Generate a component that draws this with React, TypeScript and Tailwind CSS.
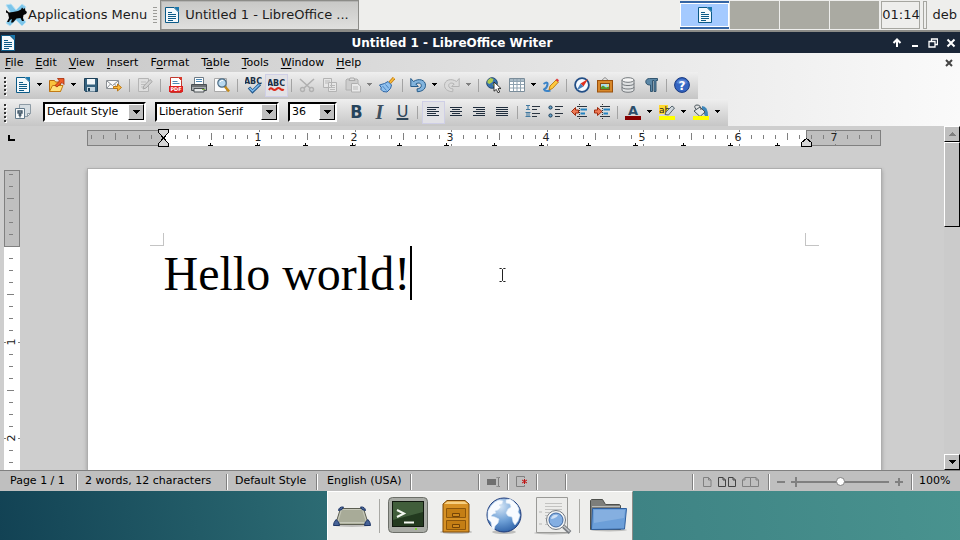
import React, { useLayoutEffect, useRef, useState } from "react";

type Kids = { children?: React.ReactNode };

function Svg({ size = 16, children }: Kids & { size?: number }) {
  return (
    <svg width={size} height={size} viewBox={`0 0 ${size} ${size}`} className="shrink-0" aria-hidden="true">
      {children}
    </svg>
  );
}

/* ---------- toolbar parts ---------- */

function Tool({ label, active, children }: Kids & { label: string; active?: boolean }) {
  return (
    <button
      type="button"
      aria-label={label}
      className={
        active
          ? "flex h-[23px] w-[23px] shrink-0 items-start border border-[#cfcfe6] bg-[#e2e2e6] pt-[2px] pl-[2px]"
          : "flex h-[23px] w-[23px] shrink-0 items-start pt-[3px] pl-[3px]"
      }
    >
      {children}
    </button>
  );
}

function Letter({ label, children }: Kids & { label: string }) {
  return (
    <button type="button" aria-label={label} className="flex h-[23px] w-[23px] shrink-0 items-center justify-center pb-[2px]">
      {children}
    </button>
  );
}

function Drop({ label, dim }: { label: string; dim?: boolean }) {
  return (
    <button type="button" aria-label={label} className="flex h-[23px] w-[11px] shrink-0 items-center pb-[2px] pl-[2px]">
      <svg width="5" height="3" viewBox="0 0 5 3" aria-hidden="true" shapeRendering="crispEdges">
        <path d="M0 0h5v1H0zM1 1h3v1H1zM2 2h1v1H2z" fill={dim ? "#808080" : "#000"} />
      </svg>
    </button>
  );
}

function Sep() {
  return (
    <div className="flex w-2 shrink-0 pl-[3px]">
      <div className="h-[13px] w-px bg-[#a3a3a3]" />
    </div>
  );
}

function Handle() {
  return (
    <div className="flex w-3 shrink-0 flex-col items-start gap-[2px] pl-1">
      {[0, 1, 2, 3, 4].map((i) => (
        <span key={i} className="h-[2px] w-[2px] bg-[#333] shadow-[1px_1px_0_#fff]" />
      ))}
    </div>
  );
}

function Combo({ label, value, width }: { label: string; value: string; width: string }) {
  return (
    <div
      className={`flex h-5 shrink-0 border-2 border-t-black border-r-white border-b-white border-l-black bg-white ${width}`}
    >
      <div className="relative flex w-full">
        <select
          aria-label={label}
          defaultValue={value}
          className="w-full appearance-none bg-white pl-[2px] text-[11px] leading-4 text-black outline-none"
        >
          <option>{value}</option>
        </select>
        <span className="pointer-events-none absolute inset-y-0 right-0 flex w-4 items-center justify-center border border-t-white border-r-black border-b-black border-l-white bg-[#bfbfbf]">
          <svg width="7" height="4" viewBox="0 0 7 4" aria-hidden="true" shapeRendering="crispEdges">
            <path d="M0 0h7v1H0zM1 1h5v1H1zM2 2h3v1H2zM3 3h1v1H3z" />
          </svg>
        </span>
      </div>
    </div>
  );
}

/* ---------- icons ---------- */

const WriterIcon = () => (
  <Svg>
    <path d="M1.500.5h8.500l4.500 4.500v10.500h-13z" fill="#f4f9fc" stroke="#0b5a87" />
    <path d="M10 0h5v5z" fill="#1a78ad" />
    <path d="M4 5.500h4M4 7.500h8M4 9.500h8M4 11.500h8M4 13.500h5" stroke="#0b5a87" />
  </Svg>
);

const XfceMouse = () => (
  <svg width="24" height="24" viewBox="0 0 24 24" className="shrink-0" aria-hidden="true">
    <path d="M2 2l5-1 5 6 6-6 4 3-6 8 6 7-4 4-6-6-6 6-4-3 6-8z" fill="#7cc5ea" stroke="#b6e0f4" />
    <path
      d="M2 7l3 2.500 4-.5 5-1 3-1.500 1-2 1.500 1.500L21 5l.3 2.500L23 9l-1 2-2.500 1-.5 3 1 3h-2l-1.500-3-4 .5L9 19.500H7l1-3.500-2 1-1 2H3l2-4-1-4.500-2-1z"
      fill="#060606"
    />
  </svg>
);

const OpenIcon = () => (
  <Svg>
    <path d="M.5 14.500v-11h5l1 1.500h5v9.500z" fill="#f9c33c" stroke="#b66a12" />
    <path d="M.5 14.500L3.500 8.500H14l-2.500 6z" fill="#ffe07a" stroke="#c27a14" />
    <path d="M6 8.500L10.500 4 8.500 1.500h6.500v6l-2-2-5 4.500z" fill="#ed5a25" stroke="#a52c08" strokeWidth=".8" />
  </Svg>
);

const SaveIcon = () => (
  <Svg>
    <path d="M1.500 1.500h13v13h-12l-1-1z" fill="#35627f" stroke="#1f4159" />
    <rect x="4" y="2" width="8" height="5.500" fill="#f2f7fa" />
    <rect x="4" y="10" width="8" height="4.500" fill="#c5d5df" />
    <rect x="5" y="11" width="2" height="3" fill="#1f4159" />
  </Svg>
);

const MailIcon = () => (
  <Svg>
    <path d="M.5 3.500h12v8H.5z" fill="#fbfbfb" stroke="#8a8f94" />
    <path d="M1 4l5.500 4.500L12 4M1 11l3.500-4M12 11L8.500 7" fill="none" stroke="#8a8f94" />
    <path d="M7.500 9.500h4V7l4 3.500-4 3.500v-2.500h-4z" fill="#fbb93a" stroke="#b9700a" strokeWidth=".9" />
  </Svg>
);

const EditIcon = () => (
  <Svg>
    <path d="M1.500 1.500h10v13h-10z" fill="#dedede" stroke="#b5b5b5" />
    <path d="M4 5h5M4 7.500h4M4 10h2" stroke="#bdbdbd" />
    <path d="M6 12l.8-3L13 2.500 15.200 4.500 9 11z" fill="#d0d0d0" stroke="#a5a5a5" />
  </Svg>
);

const PdfIcon = () => (
  <Svg>
    <path d="M2.500.5h8l3 3v12h-11z" fill="#fff" stroke="#c1392f" />
    <path d="M10 0h4v4z" fill="#d83a2c" />
    <path d="M4.500 4.500h5M4.500 6.500h7" stroke="#4c88b5" />
    <rect x="1" y="9" width="14" height="6" fill="#e02020" />
    <text x="8" y="14" fontSize="5" fontWeight="700" textAnchor="middle" fill="#fff">
      PDF
    </text>
  </Svg>
);

const PrintIcon = () => (
  <Svg>
    <path d="M3.500 7V.5h9V7" fill="#fff" stroke="#6f7b85" />
    <path d="M5 2.500h6M5 4.500h6" stroke="#4c88b5" />
    <path d="M.5 7.500h15v6H.5z" fill="#a9adb0" stroke="#4b5054" />
    <path d="M1 8h14v2H1z" fill="#6e7275" />
    <path d="M3 11.500h10v3.500H3z" fill="#e7e9ea" stroke="#4b5054" />
    <path d="M11 12.500h3" stroke="#7fb93a" />
  </Svg>
);

const PreviewIcon = () => (
  <Svg>
    <path d="M.5 1.500h12v13H.5z" fill="#fbfbfb" stroke="#a8a8a8" />
    <path d="M10.500 9l4.500 5.500" stroke="#c48a1a" strokeWidth="2.500" />
    <circle cx="8" cy="6" r="4.200" fill="#b9d9ef" stroke="#4c6b83" strokeWidth="1.200" />
    <path d="M6 5q1-2 3-1.500" fill="none" stroke="#fff" />
  </Svg>
);

const SpellIcon = ({ auto }: { auto?: boolean }) => (
  <svg width="17" height="17" viewBox="0 0 17 17" className="shrink-0" aria-hidden="true">
    <text x="8" y={auto ? 9 : 7} fontSize="8" fontWeight="700" textAnchor="middle" fill="#1b2f45">
      ABC
    </text>
    {auto ? (
      <path d="M1 13q1.500-3 3.500-1t4 0 4 0 3 0" fill="none" stroke="#dd2a1b" strokeWidth="2" />
    ) : (
      <g fill="none">
        <path d="M4 10.500l3.500 4L15 7" stroke="#20578c" strokeWidth="3.200" />
        <path d="M4.500 11l3 3L14.500 7.500" stroke="#7ebcf0" strokeWidth="1.500" />
      </g>
    )}
  </svg>
);

const CutIcon = () => (
  <Svg>
    <path d="M1 2l10 9M15 2L5 11" stroke="#b0b0b0" strokeWidth="1.600" />
    <circle cx="3.500" cy="12.500" r="2" fill="none" stroke="#b0b0b0" strokeWidth="1.400" />
    <circle cx="12.500" cy="12.500" r="2" fill="none" stroke="#b0b0b0" strokeWidth="1.400" />
  </Svg>
);

const CopyIcon = () => (
  <Svg>
    <path d="M1.500 1.500h8v9h-8zM6.500 5.500h8v9h-8z" fill="#e6e6e6" stroke="#b3b3b3" />
    <path d="M3 4h5M3 6h3M8 8.500h5M8 10.500h5M8 12.500h5" stroke="#b9b9b9" />
  </Svg>
);

const PasteIcon = () => (
  <Svg>
    <path d="M1 3l1-1h10l1 1v10H1z" fill="#cdcdcd" stroke="#b0b0b0" />
    <path d="M4 3.500L5 1h4l1 2.500z" fill="#ddd" stroke="#aaa" />
    <path d="M6.500 6.500h6l3 2.500v6h-9z" fill="#e9e9e9" stroke="#b0b0b0" />
    <path d="M8 10h5M8 12h5" stroke="#bbb" />
  </Svg>
);

const BrushIcon = () => (
  <Svg>
    <path d="M10.500 6L15 1" stroke="#c37a10" strokeWidth="3.200" />
    <path d="M10.500 6L15 1" stroke="#f8bd3c" strokeWidth="1.600" />
    <path d="M.5 8l5-1.500L9 4.500l3.500 3.500-1 3.500L8 15l-4-.5L1.500 12l1-1z" fill="#8fc0ee" stroke="#2f66a5" />
    <path d="M3.500 9l4 4.500M6.500 7.500l3.500 4" stroke="#3c76b4" strokeWidth=".8" />
  </Svg>
);

const UndoIcon = ({ dim }: { dim?: boolean }) => (
  <Svg>
    <g transform={dim ? "translate(16 0) scale(-1 1)" : undefined}>
      <path
        d="M.8 1.500v8h7.500L5.800 7c3-2 5.500-.5 5.500 1.500 0 2-1.500 3.200-4.300 3.400l.3 2.800c5-.1 8.200-2.700 8.200-6.400C15.500 3 9 .8 3.500 4.500z"
        fill={dim ? "#dadada" : "#82b4dd"}
        stroke={dim ? "#b4b4b4" : "#255b8a"}
      />
    </g>
  </Svg>
);

const LinkIcon = () => (
  <Svg>
    <circle cx="6" cy="6" r="5.300" fill="#3872b0" stroke="#254a70" />
    <path d="M1.500 3.500L4.500 1l3 1-1 3-3 2-2-1zM6.500 7.500l3-1.500 1.500 2-2.500 2.500z" fill="#b0cc50" />
    <path d="M8 5l7 6.500-3 .2 1.700 3.300-1.700.8-1.700-3.400L8 14.200z" fill="#fff" stroke="#222" strokeWidth=".9" />
  </Svg>
);

const TableIcon = () => (
  <Svg>
    <path d="M.5 1.500h15v13H.5z" fill="#fff" stroke="#7b8d9a" />
    <path d="M1 2h14v2.500H1z" fill="#a9bac6" />
    <path d="M1 4.500h14M1 7.500h14M1 11h14M4.500 2v12M8 2v12M11.500 2v12" stroke="#8fa2b0" />
  </Svg>
);

const DrawIcon = () => (
  <Svg>
    <path d="M.5 7Q5 4 4.500 7.500T1 12.500q1 2.500 6.500 1" fill="none" stroke="#3a83c8" strokeWidth="2" />
    <path d="M6 13l1-4 6-6 2.500 2L9.500 11.500z" fill="#ffc83d" stroke="#b5780f" strokeWidth=".9" />
    <path d="M12.500 3L14 1.500l2 1.800L14.800 5z" fill="#e03c3c" />
  </Svg>
);

const CompassIcon = () => (
  <Svg>
    <circle cx="8" cy="8" r="6.900" fill="#f5faff" stroke="#234f86" strokeWidth="1.800" />
    <path d="M14 2L9.500 9.500 6.500 6.500z" fill="#e0301f" />
    <path d="M2.500 13.500l4-7 3 3z" fill="#4b7fb8" />
  </Svg>
);

const GalleryIcon = () => (
  <Svg>
    <path d="M4 4l4-3.500L12 4" fill="none" stroke="#8d8d8d" />
    <rect x=".5" y="3.500" width="15" height="11.500" fill="#d8882b" stroke="#9b500b" />
    <rect x="3.500" y="6.500" width="9" height="6" fill="#a8dcf0" stroke="#8b4a10" />
    <path d="M4 12v-2l2-1.500 3 2 3-1v2.500z" fill="#559a2c" />
    <circle cx="10.500" cy="8.500" r="1" fill="#ffe14e" />
  </Svg>
);

const DbIcon = () => (
  <Svg>
    <path d="M2 3v10c0 3 12 3 12 0V3" fill="#dfe1e2" stroke="#74797d" />
    <ellipse cx="8" cy="3" rx="6" ry="2.300" fill="#f5f5f5" stroke="#74797d" />
    <path d="M2 6.500c0 2.700 12 2.700 12 0M2 10c0 2.700 12 2.700 12 0" fill="none" stroke="#74797d" />
  </Svg>
);

const PilcrowIcon = () => (
  <Svg>
    <path d="M14.500 1.500H6.500C1.500 1.500 1.500 8 6.500 8h1v6.500h2V3.500h1.500v11h2v-11h1.500z" fill="#5b87a6" stroke="#284c68" strokeWidth=".9" />
  </Svg>
);

const HelpIcon = () => (
  <Svg>
    <circle cx="8" cy="8" r="7.400" fill="#3566c2" stroke="#17387f" />
    <path d="M2.500 6a5.800 5 0 0 1 11 0q-5 2.500-11 0" fill="#6f98dd" opacity=".6" />
    <text x="8" y="12.500" fontSize="12" fontWeight="700" textAnchor="middle" fill="#fff">
      ?
    </text>
  </Svg>
);

const StylesIcon = () => (
  <Svg>
    <path d="M4.500.5h11v9l-3 3h-8z" fill="#d5dde2" stroke="#8d9ba5" />
    <path d="M15.500 9.500h-3v3z" fill="#f4f6f7" stroke="#8d9ba5" />
    <path d="M.5 4.500h9v10h-9z" fill="#f8fafb" stroke="#627a8b" />
    <path d="M3 9V7h4v2zM5 9v4.500M3.500 11h3" fill="none" stroke="#3c5364" strokeWidth="1.300" />
  </Svg>
);

const LINES: Record<string, string> = {
  left: "M2 3.500h12M2 5.500h9M2 7.500h12M2 9.500h9M2 11.500h12",
  center: "M2 3.500h12M4 5.500h8M2 7.500h12M4 9.500h8M2 11.500h12",
  right: "M2 3.500h12M5 5.500h9M2 7.500h12M5 9.500h9M2 11.500h12",
  full: "M2 3.500h12M2 5.500h12M2 7.500h12M2 9.500h12M2 11.500h12",
};
const AlignIcon = ({ kind }: { kind: string }) => (
  <Svg>
    <path d={LINES[kind]} stroke="#1f2d3d" />
  </Svg>
);

const ListIcon = ({ bullets }: { bullets?: boolean }) => (
  <Svg>
    {bullets ? (
      <g>
        <circle cx="2.500" cy="3.500" r="1.600" fill="#69a3c8" stroke="#153a58" />
        <circle cx="2.500" cy="11.500" r="1.600" fill="#69a3c8" stroke="#153a58" />
      </g>
    ) : (
      <path d="M1 1.500h4M3 1.500v4M1 5.500h4M.5 8.500h5M2 8.500v4M4 8.500v4M.5 12.500h5" fill="none" stroke="#4179a0" />
    )}
    <path d="M7 2.500h8M7 5.500h5M7 9.500h8M7 12.500h5" stroke="#2a3440" />
  </Svg>
);

const IndentIcon = ({ inward }: { inward?: boolean }) => (
  <Svg>
    <path d="M6 2.500h10M6 12.500h10" stroke="#2a3440" />
    <path d="M9.500 5.500h6.500M9.500 9.500h4.500" stroke="#2382c0" strokeWidth="2" />
    <path d="M8.500 0v15" stroke="#333" strokeDasharray="1 1" />
    <path
      d={inward ? "M.5 6h3V3.500L8 7.500l-4.500 4V9h-3z" : "M7.500 6h-3V3.500L.5 7.500l4 4V9h3z"}
      fill="#ee7a55"
      stroke="#9f2a0d"
      strokeWidth="1"
    />
  </Svg>
);

const FontColorIcon = () => (
  <Svg>
    <text x="8" y="11" fontSize="13" fontWeight="700" textAnchor="middle" fill="#2c4f6c">
      A
    </text>
    <rect y="12" width="16" height="4" fill="#860000" />
  </Svg>
);

const HighlightIcon = () => (
  <Svg>
    <rect x="0" y="1" width="9" height="9" fill="#ffd92e" />
    <text x="0" y="9" fontSize="9" fill="#222">
      ab
    </text>
    <path d="M6 10.500l1-2.500L13 2l2.500 2-6 7z" fill="#cfd7dc" stroke="#54636d" />
    <rect y="12" width="16" height="4" fill="#ffff00" />
  </Svg>
);

const BucketIcon = () => (
  <Svg>
    <path d="M9 2q6 0 6 10h-3L9 6z" fill="#3f87ba" />
    <path d="M1 7l6-4 5 5-5 4.500z" fill="#e4e7e8" stroke="#4a555c" />
    <path d="M3 5.500Q0 1 4 1t4 5" fill="none" stroke="#4a555c" />
    <rect y="12" width="16" height="4" fill="#ffff00" />
  </Svg>
);

/* ---------- rulers ---------- */

const range = (n: number) => Array.from({ length: n }, (_, i) => i);
const TAB_STOPS = [210, 257, 305, 352, 399, 446, 494, 541, 588, 635, 683, 730, 777];

function HorizontalRuler() {
  return (
    <svg width="794" height="18" viewBox="87 129 794 18" className="shrink-0" aria-hidden="true" shapeRendering="crispEdges">
      <rect x="163" y="130" width="643" height="16" fill="#fff" />
      <rect x="87.500" y="130.500" width="76" height="15" fill="#bfbfbf" stroke="#808080" />
      <rect x="806.500" y="130.500" width="74" height="15" fill="#bfbfbf" stroke="#808080" />
      {range(66).map((i) => {
        const k = i - 6;
        const x = 163.5 + k * 12;
        if (k === 0) return null;
        if (k % 8 === 0) return <path key={k} d={`M${x} 130v2M${x} 144v2`} stroke="#808080" />;
        return k % 4 === 0 ? (
          <path key={k} d={`M${x} 133v7`} stroke="#808080" />
        ) : (
          <path key={k} d={`M${x} 135v4`} stroke="#808080" />
        );
      })}
      {range(7).map((i) => (
        <text key={i} x={258 + i * 96} y="141" fontSize="11" textAnchor="middle" fill="#222">
          {i + 1}
        </text>
      ))}
      {TAB_STOPS.map((x) => (
        <path key={x} d={`M${x} 143h1v2h2v1h-5v-1h2z`} fill="#000" />
      ))}
      <g fill="#d6d6d6" stroke="#000">
        <path d="M158.500 129.500h10v3l-5 5.500-5-5.500z" />
        <path d="M158.500 146.500h10v-3l-5-5.500-5 5.500z" />
        <path d="M801.500 146.500h10v-4l-5-4-5 4z" />
      </g>
    </svg>
  );
}

function VerticalRuler() {
  const box = useRef<HTMLDivElement>(null);
  const [length, setLength] = useState(300);
  useLayoutEffect(() => {
    const el = box.current;
    if (!el) return;
    const measure = () => setLength(el.clientHeight);
    measure();
    const watcher = new ResizeObserver(measure);
    watcher.observe(el);
    return () => watcher.disconnect();
  }, []);
  const bottom = 170 + length;
  return (
    <div ref={box} className="h-full w-4 overflow-hidden">
      <svg width="16" height={length} viewBox={`4 170 16 ${length}`} className="block" aria-hidden="true" shapeRendering="crispEdges">
        <rect x="4" y="246" width="16" height={Math.max(0, bottom - 246)} fill="#fff" />
        <rect x="4.500" y="170.500" width="15" height="76" fill="#bfbfbf" stroke="#808080" />
        {range(Math.ceil(length / 12)).map((i) => {
          const k = i - 6;
          const y = 246.5 + k * 12;
          if (k === 0) return null;
          if (k % 8 === 0) return <path key={k} d={`M4 ${y}h2M18 ${y}h2`} stroke="#808080" />;
          return k % 4 === 0 ? (
            <path key={k} d={`M7 ${y}h7`} stroke="#808080" />
          ) : (
            <path key={k} d={`M9 ${y}h4`} stroke="#808080" />
          );
        })}
        {range(Math.max(0, Math.floor((bottom - 254) / 96))).map((i) => {
          const y = 342 + i * 96;
          return (
            <text key={i} x="15" y={y} fontSize="11" textAnchor="middle" fill="#222" transform={`rotate(-90 15 ${y})`}>
              {i + 1}
            </text>
          );
        })}
      </svg>
    </div>
  );
}

/* ---------- dock icons ---------- */

const DeskIcon = () => (
  <Svg size={40}>
    <ellipse cx="20" cy="29.500" rx="18" ry="1.500" fill="#0003" />
    <path d="M8.500 12.500h23l5 16h-33z" fill="#b2b5a1" stroke="#5c5e52" />
    <path d="M9.500 13.500h21l4 13h-29z" fill="#a8ab98" stroke="#c6c8ba" />
    <g fill="#476397" stroke="#1f3767">
      <path d="M6.500 14.500q.5-4 5-3.500l-1.500 2.500zM33.500 14.500q-.5-4-5-3.500l1.500 2.500z" />
      <path d="M1.500 29.500q0-3 2.500-6 3.500 2 3.500 6zM38.500 29.500q0-3-2.500-6-3.500 2-3.500 6z" />
    </g>
  </Svg>
);

const TerminalIcon = () => (
  <Svg size={40}>
    <rect x=".5" y="1.500" width="39" height="35" rx="4" fill="#a9aca6" stroke="#6c6f69" />
    <rect x="4.500" y="5.500" width="31" height="25" fill="#233a1f" stroke="#10180e" />
    <path d="M5 6h30v10L5 24z" fill="#52714b" opacity=".65" />
    <path d="M9 14l7 3.500L9 21M16 26.500h10" fill="none" stroke="#f4f8f1" strokeWidth="2" />
    <path d="M27 33h2" stroke="#7bd032" strokeWidth="2" />
  </Svg>
);

const CabinetIcon = () => (
  <Svg size={40}>
    <ellipse cx="20" cy="36" rx="16" ry="2" fill="#0003" />
    <path d="M7 8l4-3.500h18L33 8v28H7z" fill="#d79125" stroke="#7f4a08" />
    <path d="M8 8l3.500-2.500h17L32 8z" fill="#f7d083" />
    <path d="M10.500 12.500h19v9h-19zM10.500 24.500h19v9h-19z" fill="#c47e14" stroke="#8d560a" />
    <path d="M16.500 17.500h7v3h-7zM16.500 28.500h7v3h-7z" fill="#d18a1d" stroke="#744407" />
  </Svg>
);

const GlobeIcon = () => (
  <Svg size={40}>
    <defs>
      <radialGradient id="sea" cx=".4" cy=".25" r=".8">
        <stop offset="0" stopColor="#d5e5f5" />
        <stop offset=".55" stopColor="#6d9fd6" />
        <stop offset="1" stopColor="#2c5fa5" />
      </radialGradient>
    </defs>
    <ellipse cx="20" cy="36" rx="12" ry="2" fill="#0003" />
    <circle cx="20" cy="19" r="17" fill="url(#sea)" stroke="#1f3a79" />
    <path
      d="M4 15l3-5 4-4 4-2 4 1-1 3-3 1 2 2-3 3-3 1 1 2-3 1-2 2 4 1 4 2-1 4-3 3-1 4-2-2-1-6-3-3zM22 4l4-1 3 2 4 4 2 4-1 3 2 3-2 6-3 4-2-3-1-5-4-1-2-3 2-4 3-2-1-3-4-1z"
      fill="#f8fbff"
      stroke="#d5e4f3"
      strokeWidth=".6"
    />
  </Svg>
);

const FinderIcon = () => (
  <Svg size={40}>
    <ellipse cx="20" cy="37" rx="18" ry="1.500" fill="#0003" />
    <path d="M4.500 1.500h31v35h-31z" fill="#ececea" stroke="#9a9a97" />
    <path d="M13 7.500h17M13 10.500h17M13 13.500h17M13 16.500h13M13 19.500h6M13 22.500h6M13 28.500h7" stroke="#c3c3c1" />
    <path d="M7 16h3M7 28h3" stroke="#b7b7b5" />
    <path d="M30 29l8 7.500" stroke="#777b80" strokeWidth="4" />
    <path d="M31 29.500l6.500 6" stroke="#c2c5c8" strokeWidth="1.500" />
    <circle cx="24" cy="24" r="8.500" fill="#8fb6e4" stroke="#f4f5f6" strokeWidth="3" />
    <circle cx="24" cy="24" r="9.500" fill="none" stroke="#74797e" />
    <circle cx="24" cy="24" r="7" fill="#83aee2" stroke="#466da3" />
    <path d="M19 23q1-5 7-4-1 3-7 4" fill="#cfe0f5" />
  </Svg>
);

const FolderIcon = () => (
  <Svg size={40}>
    <ellipse cx="21" cy="34" rx="18" ry="1.500" fill="#0003" />
    <path d="M2.500 33.500v-29l1-1h11l3 5h14l1 1v24z" fill="#7d7e7b" stroke="#4e504c" />
    <path d="M4 10.500h28" stroke="#b9bab7" />
    <path d="M4.500 12.500h34l-2 20.500-33 .5z" fill="#6c9fd9" stroke="#2f5f9e" />
    <path d="M6 14h31l-1 8-30 5z" fill="#9dc0e8" opacity=".5" />
  </Svg>
);

function DockItem({ label, children }: Kids & { label: string }) {
  return (
    <button type="button" aria-label={label} className="flex h-12 w-12 items-center justify-center">
      {children}
    </button>
  );
}
const DockSep = () => (
  <div className="flex w-2 pl-[3px]">
    <div className="h-[34px] w-px bg-[#a8a8a4]" />
  </div>
);

/* ---------- regions ---------- */

function Panel() {
  return (
    <header className="flex h-8 shrink-0 items-stretch border-b-2 border-[#8a8a86] bg-[#eeeeec] text-[13px] text-[#1c1c1c]">
      <button type="button" className="flex items-center pl-1">
        <XfceMouse />
        <span>Applications Menu</span>
      </button>
      <div className="ml-[6px] flex flex-col justify-center gap-[2px] pr-[3px]">
        {range(6).map((i) => (
          <span key={i} className="h-px w-1 bg-[#9c9c98]" />
        ))}
      </div>
      <button
        type="button"
        className="flex w-[199px] items-center gap-[5px] border border-[#8c8c88] bg-linear-to-b from-[#c8c8c6] to-[#e0e0de] pl-[3px] shadow-[inset_1px_1px_0_#b4b4b2]"
      >
        <WriterIcon />
        <span className="whitespace-pre">Untitled 1 - LibreOffice ...</span>
      </button>
      <div className="flex-1" />
      <nav aria-label="Workspaces" className="flex gap-px py-px">
        <button
          type="button"
          aria-label="Workspace 1"
          className="flex w-[49px] items-center justify-center border-y-2 border-[#3465a4] bg-[#a4caff] shadow-[inset_0_0_0_1px_#fff]"
        >
          <WriterIcon />
        </button>
        {[2, 3, 4].map((n) => (
          <button key={n} type="button" aria-label={`Workspace ${n}`} className="w-[49px] bg-[#aaaaa2]" />
        ))}
      </nav>
      <div className="my-px ml-[2px] flex w-[39px] items-center justify-center border border-[#a6a6a0]">01:14</div>
      <div className="my-px ml-[3px] w-1 border border-[#a6a6a0]" />
      <button type="button" className="pr-[3px] pl-[5px]">
        deb
      </button>
    </header>
  );
}

function TitleBar() {
  return (
    <div className="flex h-[21px] shrink-0 items-center bg-[#1a2637] text-white">
      <WriterIcon />
      <h1 className="flex-1 text-center text-[12px] font-bold">Untitled 1 - LibreOffice Writer</h1>
      <div className="flex w-[72px] shrink-0 items-center">
        {[
          ["Shade", "M5 9V1.500M1.500 5L5 1.500 8.500 5"],
          ["Minimise", "M2 8h6"],
          ["Restore", "M3.500 3V1h6v5.500H7.500M1 3.500h6v5.500H1z"],
          ["Close", "M1.500 1.500l7 7M8.500 1.500l-7 7"],
        ].map(([name, d]) => (
          <button key={name} type="button" aria-label={name} className="flex w-[18px] justify-center">
            <svg width="10" height="10" viewBox="0 0 10 10" aria-hidden="true">
              <path d={d} fill="none" stroke="#fff" strokeWidth={name === "Restore" ? 1.3 : 2} />
            </svg>
          </button>
        ))}
      </div>
    </div>
  );
}

const MENUS: [string, string, string][] = [
  ["", "F", "ile"],
  ["", "E", "dit"],
  ["", "V", "iew"],
  ["", "I", "nsert"],
  ["F", "o", "rmat"],
  ["T", "a", "ble"],
  ["", "T", "ools"],
  ["", "W", "indow"],
  ["", "H", "elp"],
];

function MenuBar() {
  return (
    <nav aria-label="Menu" className="flex h-[19px] shrink-0 items-center gap-3 pt-px pl-[5px] text-[11px]">
      {MENUS.map(([a, b, c]) => (
        <button key={a + b + c} type="button">
          {a}
          <span className="underline underline-offset-2">{b}</span>
          {c}
        </button>
      ))}
      <button type="button" aria-label="Close document" className="mr-[7px] ml-auto">
        <svg width="8" height="8" viewBox="0 0 8 8" aria-hidden="true">
          <path d="M1 1l6 6M7 1L1 7" stroke="#444" strokeWidth="2" />
        </svg>
      </button>
    </nav>
  );
}

const BAR = "flex w-fit items-center bg-linear-to-b from-[#efefef] to-[#c6c6c6] pr-1";

function StandardBar() {
  return (
    <div className={`h-[27px] ${BAR}`}>
      <Handle />
      <Tool label="New"><WriterIcon /></Tool>
      <Drop label="New options" />
      <Tool label="Open"><OpenIcon /></Tool>
      <Drop label="Open options" />
      <Tool label="Save"><SaveIcon /></Tool>
      <Tool label="Email"><MailIcon /></Tool>
      <Sep />
      <Tool label="Edit file"><EditIcon /></Tool>
      <Sep />
      <Tool label="Export as PDF"><PdfIcon /></Tool>
      <Tool label="Print"><PrintIcon /></Tool>
      <Tool label="Page preview"><PreviewIcon /></Tool>
      <Sep />
      <Tool label="Spelling"><SpellIcon /></Tool>
      <Tool label="Automatic spell check" active><SpellIcon auto /></Tool>
      <Sep />
      <Tool label="Cut"><CutIcon /></Tool>
      <Tool label="Copy"><CopyIcon /></Tool>
      <Tool label="Paste"><PasteIcon /></Tool>
      <Drop label="Paste options" dim />
      <Tool label="Clone formatting"><BrushIcon /></Tool>
      <Sep />
      <Tool label="Undo"><UndoIcon /></Tool>
      <Drop label="Undo history" />
      <Tool label="Redo"><UndoIcon dim /></Tool>
      <Drop label="Redo history" dim />
      <Sep />
      <Tool label="Hyperlink"><LinkIcon /></Tool>
      <Tool label="Table"><TableIcon /></Tool>
      <Drop label="Table size" />
      <Tool label="Draw functions"><DrawIcon /></Tool>
      <Sep />
      <Tool label="Navigator"><CompassIcon /></Tool>
      <Tool label="Gallery"><GalleryIcon /></Tool>
      <Tool label="Data sources"><DbIcon /></Tool>
      <Tool label="Nonprinting characters"><PilcrowIcon /></Tool>
      <Sep />
      <Tool label="Help"><HelpIcon /></Tool>
    </div>
  );
}

function FormatBar() {
  return (
    <div className={`h-[27px] ${BAR}`}>
      <Handle />
      <Tool label="Styles"><StylesIcon /></Tool>
      <div className="mx-2 flex gap-[9px] pb-px">
        <Combo label="Paragraph style" value="Default Style" width="w-[103px]" />
        <Combo label="Font name" value="Liberation Serif" width="w-[124px]" />
        <Combo label="Font size" value="36" width="w-[49px]" />
      </div>
      <Letter label="Bold"><span className="font-['DejaVu_Sans_Condensed','DejaVu_Sans',sans-serif] text-[18px] leading-none font-bold text-[#26435b]">B</span></Letter>
      <Letter label="Italic"><span className="font-['Liberation_Serif',serif] text-[20px] leading-none font-bold text-[#3d5060] italic">I</span></Letter>
      <Letter label="Underline"><span className="text-[16px] leading-none text-[#2d4558] underline decoration-2 underline-offset-1">U</span></Letter>
      <Sep />
      <Tool label="Align left" active><AlignIcon kind="left" /></Tool>
      <Tool label="Centre"><AlignIcon kind="center" /></Tool>
      <Tool label="Align right"><AlignIcon kind="right" /></Tool>
      <Tool label="Justify"><AlignIcon kind="full" /></Tool>
      <Sep />
      <Tool label="Numbering"><ListIcon /></Tool>
      <Tool label="Bullets"><ListIcon bullets /></Tool>
      <Tool label="Decrease indent"><IndentIcon /></Tool>
      <Tool label="Increase indent"><IndentIcon inward /></Tool>
      <Sep />
      <Tool label="Font colour"><FontColorIcon /></Tool>
      <Drop label="Font colours" />
      <Tool label="Highlighting"><HighlightIcon /></Tool>
      <Drop label="Highlighting colours" />
      <Tool label="Background colour"><BucketIcon /></Tool>
      <Drop label="Background colours" />
    </div>
  );
}

const RAISED = "border border-t-white border-r-black border-b-black border-l-white bg-[#bfbfbf]";

function Scrollbar() {
  return (
    <div className="flex w-4 shrink-0 flex-col bg-[#cbcbcb]">
      <button type="button" aria-label="Scroll up" className={`flex h-4 items-center justify-center ${RAISED}`}>
        <svg width="7" height="4" viewBox="0 0 7 4" aria-hidden="true" shapeRendering="crispEdges">
          <path d="M3 0h1v1h1v1h1v1h1v1H0V3h1V2h1V1h1z" fill="#808080" />
        </svg>
      </button>
      <div className={`h-[85px] ${RAISED}`} />
      <div className="flex-1" />
      <button type="button" aria-label="Scroll down" className={`flex h-4 items-center justify-center ${RAISED}`}>
        <svg width="7" height="4" viewBox="0 0 7 4" aria-hidden="true" shapeRendering="crispEdges">
          <path d="M0 0h7v1H0zM1 1h5v1H1zM2 2h3v1H2zM3 3h1v1H3z" />
        </svg>
      </button>
    </div>
  );
}

function DocumentArea() {
  return (
    <main className="flex min-h-0 flex-1 bg-[#cecece]">
      <div className="flex min-w-0 flex-1 flex-col overflow-hidden">
        <div className="flex pt-[3px]">
          <button type="button" aria-label="Tab type" className="flex w-6 shrink-0 items-start pt-[6px] pl-2">
            <svg width="7" height="6" viewBox="0 0 7 6" aria-hidden="true">
              <path d="M0 0h2v4h5v2H0z" />
            </svg>
          </button>
          <div className="flex min-w-0 flex-1 justify-center">
            <HorizontalRuler />
          </div>
        </div>
        <div className="flex min-h-0 flex-1 pt-[21px]">
          <div className="w-6 shrink-0 pt-[2px] pl-1">
            <VerticalRuler />
          </div>
          <div className="flex min-w-0 flex-1 justify-center">
            <article className="relative w-[795px] shrink-0 border border-b-0 border-[#aeaeae] bg-white shadow-[0_2px_4px_rgba(0,0,0,0.25)]">
              <div className="flex justify-between px-[62px] pt-16">
                <div className="h-[13px] w-[14px] border-r border-b border-[#c4c4c4]" />
                <div className="h-[13px] w-[14px] border-b border-l border-[#c4c4c4]" />
              </div>
              <div className="flex items-start pl-[76px]">
                <p className="font-['Liberation_Serif',serif] text-[48px] leading-[56px] text-black">Hello world!</p>
                <span className="h-[54px] w-[2px] bg-black" />
              </div>
              <svg width="7" height="14" viewBox="0 0 7 14" className="absolute top-[99px] left-[411px]" aria-hidden="true">
                <path d="M.5.5h2l1 1 1-1h2M3.500 1.500v11M.5 13.500h2l1-1 1 1h2" fill="none" stroke="#222" />
              </svg>
            </article>
          </div>
        </div>
      </div>
      <Scrollbar />
    </main>
  );
}

const CELL = "flex h-4 shrink-0 items-center border-r border-[#808080] shadow-[1px_0_0_#fff]";

function StatusBar() {
  return (
    <footer className="flex h-[21px] shrink-0 items-center border-t border-[#808080] bg-[#bfbfbf] pt-px text-[11px]">
      <div className={`${CELL} w-[77px] pl-[10px]`}>Page 1 / 1</div>
      <div className={`${CELL} w-[150px] pl-2`}>2 words, 12 characters</div>
      <div className={`${CELL} w-[90px] pl-2`}>Default Style</div>
      <div className={`${CELL} w-[94px] pl-[10px]`}>English (USA)</div>
      <div className={`${CELL} w-[68px]`} />
      <div className={`${CELL} w-[29px] justify-center`}>
        <svg width="13" height="10" viewBox="0 0 13 10" aria-hidden="true">
          <path d="M0 2h9v6H0z" fill="#707070" />
          <path d="M9.500.5h1l.5.5.5-.5h1.500M11.500 1v8M9.500 9.500h1l.5-.5.5.5h1.500" fill="none" stroke="#808080" />
        </svg>
      </div>
      <div className={`${CELL} w-[29px] justify-center`}>
        <svg width="12" height="12" viewBox="0 0 12 12" aria-hidden="true">
          <path d="M8.500 2V.5h-8v10h8V9" fill="none" stroke="#808080" />
          <path d="M8.500 3v5M6 4l5 3M11 4L6 7" stroke="#c01010" />
        </svg>
      </div>
      <div className={`${CELL} w-[29px]`} />
      <div className={`${CELL} min-w-0 flex-1`} />
      <div className={`${CELL} w-[76px] justify-center gap-[6px]`}>
        <button type="button" aria-label="Single-page view">
          <svg width="9" height="10" viewBox="0 0 9 10" aria-hidden="true">
            <path d="M.5.5h5l2.500 2.500v6.500H.5zM5.500.5V3H8" fill="none" stroke="#808080" />
          </svg>
        </button>
        <button type="button" aria-label="Multiple-page view">
          <svg width="18" height="10" viewBox="0 0 18 10" aria-hidden="true">
            <path d="M.5.5h4.500l2.500 2.500v6.500h-7zM5 .5V3h2.500M10.500.5H15L17.500 3v6.500h-7zM15 .5V3h2.500" fill="none" stroke="#444" />
          </svg>
        </button>
        <button type="button" aria-label="Book view">
          <svg width="17" height="10" viewBox="0 0 17 10" aria-hidden="true">
            <path d="M8.500.5v9h-8V3L3 .5h5.500H14L16.500 3v6.500h-8M3 .5V3H.5M14 .5V3h2.500" fill="none" stroke="#808080" />
          </svg>
        </button>
      </div>
      <div className={`${CELL} w-[143px] justify-center gap-[6px]`}>
        <button type="button" aria-label="Zoom out">
          <svg width="8" height="8" viewBox="0 0 8 8" aria-hidden="true">
            <path d="M0 4h8" stroke="#808080" strokeWidth="2" />
          </svg>
        </button>
        <input
          type="range"
          aria-label="Zoom"
          defaultValue={50}
          className="h-[10px] w-[98px] appearance-none bg-[linear-gradient(#808080,#808080),linear-gradient(#808080,#808080)] bg-[length:100%_2px,2px_10px] bg-[position:center,4px_center] bg-no-repeat [&::-webkit-slider-thumb]:h-[9px] [&::-webkit-slider-thumb]:w-[9px] [&::-webkit-slider-thumb]:appearance-none [&::-webkit-slider-thumb]:rounded-full [&::-webkit-slider-thumb]:border [&::-webkit-slider-thumb]:border-[#808080] [&::-webkit-slider-thumb]:bg-white"
        />
        <button type="button" aria-label="Zoom in">
          <svg width="8" height="8" viewBox="0 0 8 8" aria-hidden="true">
            <path d="M0 4h8M4 0v8" stroke="#808080" strokeWidth="2" />
          </svg>
        </button>
      </div>
      <button type="button" className="w-12 shrink-0 pl-[7px] text-left">
        100%
      </button>
    </footer>
  );
}

function Dock() {
  return (
    <div className="flex h-[49px] shrink-0 justify-center bg-[linear-gradient(80deg,#124254_0%,#2c6b73_34%,#3e8384_66%,#49938f_100%)]">
      <nav aria-label="Dock" className="flex items-center border border-b-0 border-t-white border-r-[#8c8c88] border-l-white bg-[#eeeeec]">
        <DockItem label="Show desktop"><DeskIcon /></DockItem>
        <DockSep />
        <DockItem label="Terminal"><TerminalIcon /></DockItem>
        <DockItem label="File manager"><CabinetIcon /></DockItem>
        <DockItem label="Web browser"><GlobeIcon /></DockItem>
        <DockItem label="Application finder"><FinderIcon /></DockItem>
        <DockSep />
        <DockItem label="Home folder"><FolderIcon /></DockItem>
      </nav>
    </div>
  );
}

export default function App() {
  return (
    <div className="flex h-screen flex-col overflow-hidden font-['DejaVu_Sans',sans-serif] text-black">
      <Panel />
      <TitleBar />
      <section aria-label="Toolbars" className="shrink-0 bg-linear-to-r from-[#c6c6c6] to-[#fafafa]">
        <MenuBar />
        <StandardBar />
        <FormatBar />
      </section>
      <DocumentArea />
      <StatusBar />
      <Dock />
    </div>
  );
}
